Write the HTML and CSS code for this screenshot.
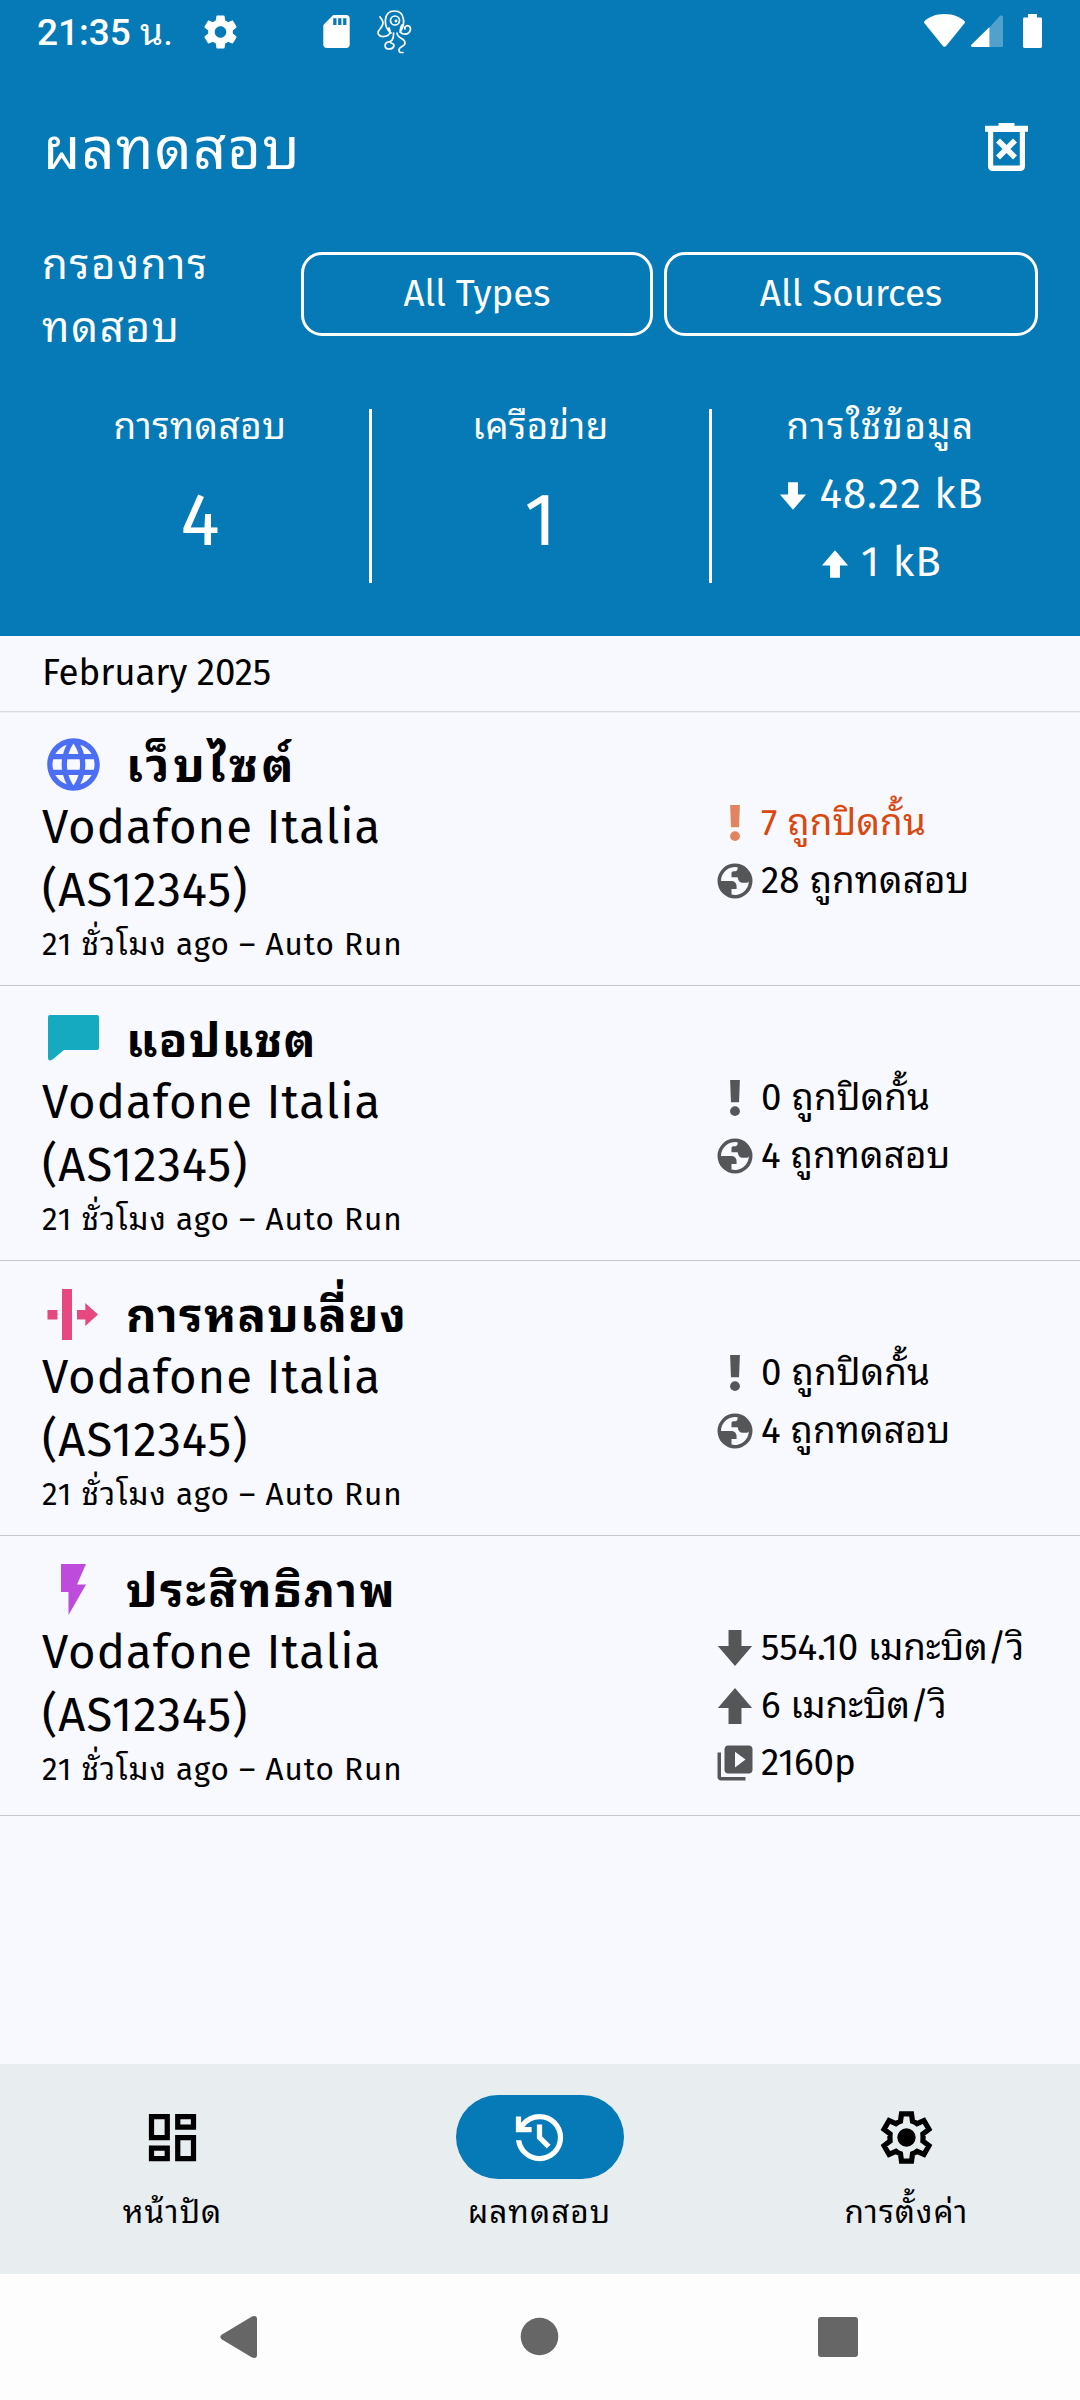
FILE: index.html
```html
<!DOCTYPE html>
<html lang="th">
<head>
<meta charset="utf-8">
<title>ผลทดสอบ</title>
<link rel="stylesheet" href="styles.css">
</head>
<body>
<svg class="defs" width="0" height="0">
  <symbol id="i-down" viewBox="0 0 24 24"><path d="M8.3 1.7h7.4v9.2h6.1L12 22.3 2.2 10.9h6.1z"/></symbol>
  <symbol id="i-up" viewBox="0 0 24 24"><path d="M8.3 22.3h7.4v-9.2h6.1L12 1.7 2.2 13.1h6.1z"/></symbol>
  <symbol id="i-bang" viewBox="0 0 24 24"><path d="M9.2 1.7h5.6l-.5 12.7H9.7z"/><circle cx="12" cy="19.5" r="2.8"/></symbol>
  <symbol id="i-earth" viewBox="0 0 24 24"><path fill-rule="evenodd" d="M12 2a10 10 0 1 0 0 20 10 10 0 1 0 0-20zM4 12A8 8 0 0 1 13.500 4.150v.8c0 .9-.9 1.500-2 1.500h-.4c-.7 0-1.100.5-1.100 1.100v2.300h3.500c.3 2 1.200 3.100 2.500 3.100h3l.9-.6A8 8 0 0 1 10 19.750V16.500h2.900V15c0-1.800-1.200-3-3-3z"/></symbol>
  <symbol id="i-video" viewBox="0 0 24 24"><path d="M4 6H2v14c0 1.100.9 2 2 2h14v-2H4V6zm16-4H8c-1.100 0-2 .9-2 2v12c0 1.100.9 2 2 2h12c1.100 0 2-.9 2-2V4c0-1.100-.9-2-2-2zm-8 12.500v-9l6 4.500-6 4.500z"/></symbol>
</svg>

<header class="header">
  <div class="status">
    <div class="status-left">
      <span class="clock">21:35 <span class="clock-th">น.</span></span>
      <svg class="s-gear" viewBox="2 2 20 20"><path d="M19.430 12.980c.040-.320.070-.640.070-.980s-.030-.660-.070-.980l2.110-1.650c.190-.150.240-.420.120-.640l-2-3.460c-.120-.220-.390-.300-.610-.220l-2.490 1c-.520-.400-1.080-.730-1.690-.980l-.380-2.650C14.460 2.180 14.250 2 14 2h-4c-.250 0-.460.180-.490.420l-.380 2.650c-.610.250-1.170.590-1.690.980l-2.490-1c-.230-.090-.490 0-.610.220l-2 3.460c-.130.220-.070.490.120.640l2.110 1.650c-.040.320-.070.650-.070.980s.030.660.070.980l-2.110 1.650c-.190.150-.240.420-.120.640l2 3.460c.120.220.390.300.610.220l2.490-1c.520.400 1.080.730 1.690.980l.380 2.650c.030.240.240.420.490.420h4c.250 0 .460-.180.490-.420l.380-2.650c.610-.250 1.170-.590 1.690-.980l2.490 1c.230.090.490 0 .610-.220l2-3.460c.120-.220.070-.490-.120-.640l-2.110-1.650zM12 15.500c-1.930 0-3.500-1.570-3.500-3.500s1.570-3.500 3.500-3.500 3.500 1.570 3.500 3.500-1.570 3.500-3.500 3.500z"/></svg>
      <svg class="s-sd" viewBox="4 2 16 20"><path d="M18 2h-8L4.020 8 4 20c0 1.100.9 2 2 2h12c1.100 0 2-.9 2-2V4c0-1.100-.9-2-2-2zm-6 6h-2V4h2v4zm3 0h-2V4h2v4zm3 0h-2V4h2v4z"/></svg>
      <svg class="s-octo" viewBox="377 9 35 45"><path d="M391 33C383 27 383 11 394.500 11S405 26 400 32M380 17C384 22 384 24 380 29C376 33 379 37 384 36.500C390 36 391 32 389 28M402 25C399 30 400 34 404 34C409 35 411.500 30 410 27C408 24.500 404 26 405 29M393.500 33C394 40 391 42 388 42C384 43 384 49 389 49C394 49 396 44 391 43M397 33C398 40 405 37 405 43C405 47 399 46 399 50C399 53 401 52.500 403 52.500"/><circle cx="395" cy="20.500" r="4.500"/><circle class="pupil" cx="396" cy="21" r="1.400"/></svg>
    </div>
    <div class="status-right">
      <svg class="s-wifi" viewBox="0 0 41 33"><path d="M20.500 0C12 0 5 2.800.6 7c-.7.700-.7 1.500-.1 2.300l18.200 22.500c1 1.200 2.600 1.200 3.600 0L40.500 9.300c.6-.8.600-1.600-.1-2.300C36 2.800 29 0 20.500 0z"/></svg>
      <svg class="s-signal" viewBox="0 0 32 32"><path class="dim" d="M18.500 12.500 28.700 1C30 0 32 .6 32 2v28.500c0 .9-.6 1.500-1.500 1.500h-12z"/><path d="M18.500 12V32H1.500C0 32-.4 30.500.6 29.500z"/></svg>
      <svg class="s-batt" viewBox="0 0 19 34"><path d="M5 0h9v3.500h3.600c.8 0 1.400.6 1.400 1.400v27.700c0 .8-.6 1.400-1.400 1.400H1.400C.6 34 0 33.400 0 32.600V4.900c0-.8.6-1.400 1.400-1.400H5z"/></svg>
    </div>
  </div>
  <div class="titlebar">
    <h1 class="title">ผลทดสอบ</h1>
    <svg class="trash" viewBox="0 0 43 48"><path d="M13.500 0h16v2.800H43v6H0v-6h13.500z"/><path fill-rule="evenodd" d="M3 7h37v36.500c0 2.500-2 4.500-4.500 4.500h-28C5 48 3 46 3 43.500zm5.200 2v33.500h26.600V9z"/><path class="x" d="M13 17.500 30 34.500M30 17.500 13 34.500"/></svg>
  </div>
  <div class="filters">
    <div class="filter-label">กรองการ<br>ทดสอบ</div>
    <div class="chip chip-types">All Types</div>
    <div class="chip chip-sources">All Sources</div>
  </div>
  <div class="stats">
    <div class="stat"><div class="stat-label">การทดสอบ</div><div class="stat-num">4</div></div>
    <div class="rule"></div>
    <div class="stat"><div class="stat-label">เครือข่าย</div><div class="stat-num">1</div></div>
    <div class="rule"></div>
    <div class="stat">
      <div class="stat-label usage-label">การใช้ข้อมูล</div>
      <div class="usage usage-first"><svg><use href="#i-down"/></svg><span>48.22 kB</span></div>
      <div class="usage"><svg><use href="#i-up"/></svg><span>1 kB</span></div>
    </div>
  </div>
</header>

<main class="list">
  <div class="month">February 2025</div>

  <article class="row">
    <div class="info">
      <div class="kind">
        <svg class="web" viewBox="0 0 24 24"><path d="M11.990 2C6.470 2 2 6.480 2 12s4.470 10 9.990 10C17.520 22 22 17.520 22 12S17.520 2 11.990 2zm6.930 6h-2.950c-.320-1.250-.780-2.450-1.380-3.560 1.840.630 3.370 1.910 4.330 3.560zM12 4.040c.830 1.200 1.480 2.530 1.910 3.960h-3.820c.430-1.430 1.080-2.760 1.910-3.960zM4.260 14C4.100 13.360 4 12.690 4 12s.1-1.360.260-2h3.380c-.080.660-.140 1.320-.140 2 0 .680.060 1.340.140 2H4.260zm.820 2h2.950c.320 1.250.780 2.450 1.380 3.560-1.840-.630-3.370-1.900-4.330-3.560zm2.950-8H5.080c.960-1.660 2.490-2.930 4.330-3.560C8.810 5.550 8.350 6.750 8.030 8zM12 19.960c-.830-1.200-1.480-2.530-1.910-3.960h3.820c-.430 1.430-1.080 2.760-1.910 3.960zM14.340 14H9.660c-.090-.660-.160-1.320-.160-2 0-.680.070-1.350.160-2h4.680c.090.650.160 1.320.160 2 0 .680-.070 1.340-.160 2zm.250 5.560c.600-1.110 1.060-2.310 1.380-3.560h2.950c-.960 1.650-2.490 2.930-4.330 3.560zM16.360 14c.080-.660.140-1.320.140-2 0-.680-.060-1.340-.140-2h3.380c.160.640.260 1.310.260 2s-.1 1.360-.260 2h-3.380z"/></svg>
        <h2 class="name-web">เว็บไซต์</h2>
      </div>
      <div class="network">Vodafone Italia<br>(AS12345)</div>
      <div class="meta">21 ชั่วโมง ago – Auto Run</div>
    </div>
    <div class="facts">
      <div class="fact alert"><svg><use href="#i-bang"/></svg><span>7 ถูกปิดกั้น</span></div>
      <div class="fact"><svg><use href="#i-earth"/></svg><span>28 ถูกทดสอบ</span></div>
    </div>
  </article>

  <article class="row">
    <div class="info">
      <div class="kind">
        <svg class="chat" viewBox="0 0 63 63"><path d="M8 7h47q2 0 2 2v31q0 2-2 2H22L10.500 51.500Q6 54 6 50V9q0-2 2-2z"/></svg>
        <h2>แอปแชต</h2>
      </div>
      <div class="network">Vodafone Italia<br>(AS12345)</div>
      <div class="meta">21 ชั่วโมง ago – Auto Run</div>
    </div>
    <div class="facts">
      <div class="fact"><svg><use href="#i-bang"/></svg><span>0 ถูกปิดกั้น</span></div>
      <div class="fact"><svg><use href="#i-earth"/></svg><span>4 ถูกทดสอบ</span></div>
    </div>
  </article>

  <article class="row">
    <div class="info">
      <div class="kind">
        <svg class="bypass" viewBox="0 0 63 63"><path d="M20 6h10v51H20zM5.500 27h10v9.500h-10zM35 27h8.300v-7L56 31.500 43.300 43v-6.500H35z"/></svg>
        <h2>การหลบเลี่ยง</h2>
      </div>
      <div class="network">Vodafone Italia<br>(AS12345)</div>
      <div class="meta">21 ชั่วโมง ago – Auto Run</div>
    </div>
    <div class="facts">
      <div class="fact"><svg><use href="#i-bang"/></svg><span>0 ถูกปิดกั้น</span></div>
      <div class="fact"><svg><use href="#i-earth"/></svg><span>4 ถูกทดสอบ</span></div>
    </div>
  </article>

  <article class="row row-last">
    <div class="info">
      <div class="kind">
        <svg class="bolt" viewBox="0 0 63 63"><path d="M19 6h25L35 26.500h9L26.500 57V34H19z"/></svg>
        <h2 class="name-perf">ประสิทธิภาพ</h2>
      </div>
      <div class="network">Vodafone Italia<br>(AS12345)</div>
      <div class="meta">21 ชั่วโมง ago – Auto Run</div>
    </div>
    <div class="facts">
      <div class="fact"><svg><use href="#i-down"/></svg><span class="speed">554.10 เมกะบิต/วิ</span></div>
      <div class="fact"><svg><use href="#i-up"/></svg><span class="speed">6 เมกะบิต/วิ</span></div>
      <div class="fact"><svg><use href="#i-video"/></svg><span class="speed">2160p</span></div>
    </div>
  </article>
</main>

<nav class="tabs">
  <div class="tab"><div class="pill"><svg viewBox="0 0 24 24"><path d="M19 5v2h-4V5h4M9 5v6H5V5h4m10 8v6h-4v-6h4M9 17v2H5v-2h4M21 3h-8v6h8V3zM11 3H3v10h8V3zm10 8h-8v10h8V11zm-10 4H3v6h8v-6z"/></svg></div><span>หน้าปัด</span></div>
  <div class="tab active"><div class="pill"><svg viewBox="0 0 24 24"><path d="M12 21q-3.450 0-6.010-2.290T3.050 13H5.100q.350 2.600 2.310 4.300T12 19q2.930 0 4.960-2.040T19 12t-2.040-4.960T12 5q-1.730 0-3.230.8T6.250 8H9v2H3V4h2v2.350Q6.280 4.750 8.110 3.880T12 3q1.880 0 3.510.71t2.850 1.930 1.930 2.850T21 12t-.71 3.510-1.930 2.850-2.850 1.930T12 21zm2.800-4.800L11 12.400V7h2v4.600l3.200 3.200z"/></svg></div><span>ผลทดสอบ</span></div>
  <div class="tab"><div class="pill"><svg viewBox="0 0 24 24"><path class="gear-line" d="M10.100 3h3.800l.4 2.850q.9.300 1.700.9l2.650-1.150 1.900 3.250-2.300 1.750q.15 1.400 0 2.800l2.300 1.750-1.900 3.250L16 17.250q-.8.600-1.700.9L13.900 21h-3.800l-.4-2.850q-.9-.3-1.700-.9L5.350 18.400l-1.900-3.250 2.300-1.750q-.15-1.400 0-2.800L3.450 8.850 5.350 5.600 8 6.750q.8-.6 1.700-.9z"/><circle cx="12" cy="12" r="3.500"/></svg></div><span>การตั้งค่า</span></div>
</nav>

<footer class="sysnav">
  <svg viewBox="0 0 1080 126"><path d="M222 60.500 252 42.500Q257 41 257 45V81Q257 85 252 83.500L222 65.500Q218.500 63 222 60.500z"/><circle cx="539.500" cy="62.500" r="18.800"/><rect x="818" y="43" width="40" height="40" rx="3"/></svg>
</footer>
</body>
</html>
```
FILE: styles.css
```css
* { box-sizing: border-box; }

body {
  margin: 0;
  width: 1080px;
  height: 2400px;
  display: flex;
  flex-direction: column;
  background: #f8f9ff;
  color: #000;
  font-family: "Fira Sans", "Noto Sans Thai Looped", "Noto Sans", sans-serif;
  overflow: hidden;
}

svg { display: block; flex: none; fill: currentColor; }
.defs { position: absolute; }
h1, h2 { margin: 0; font-weight: 400; }
span, h1, h2, .meta { white-space: nowrap; }

/* Header */
.header { height: 636px; background: #057ab7; color: #fff; }

.status {
  height: 63px;
  display: flex;
  justify-content: space-between;
  padding: 0 38px 0 37px;
}
.status-left, .status-right { display: flex; align-items: flex-start; }
.clock {
  width: 167px;
  font: 500 37px/66px Roboto, "Noto Sans Thai Looped", sans-serif;
}
.clock-th { font-weight: 400; }
.s-gear { width: 33px; height: 34px; margin-top: 15px; }
.s-sd { width: 27px; height: 33px; margin: 15px 0 0 86px; }
.s-octo { width: 35px; height: 45px; margin: 9px 0 0 27px; fill: none; stroke: #fff; stroke-width: 1.7; stroke-linecap: round; }
.s-octo .pupil { fill: #fff; stroke: none; }
.s-wifi { width: 41px; height: 33px; margin-top: 14px; }
.s-signal { width: 32px; height: 32px; margin: 15px 0 0 6px; }
.s-signal .dim { opacity: .3; }
.s-batt { width: 19px; height: 34px; margin: 14px 0 0 20px; }

.titlebar {
  height: 168px;
  display: flex;
  justify-content: space-between;
  padding: 53px 52px 0 43px;
}
.title { font-size: 57.75px; line-height: 68px; letter-spacing: 1.2px; }
.trash { width: 43px; height: 48px; margin-top: 7px; }
.trash .x { stroke: #fff; stroke-width: 5.6; }

.filters { height: 168px; display: flex; padding-left: 42px; }
.filter-label { width: 259px; padding-top: 3px; font-size: 42px; line-height: 63px; letter-spacing: 1.7px; }
.chip {
  height: 84px;
  margin-top: 21px;
  border: 3px solid #fff;
  border-radius: 21px;
  font-size: 36.75px;
  line-height: 78px;
  text-align: center;
}
.chip-types { width: 352px; margin-right: 11px; }
.chip-sources { width: 374px; }

.stats {
  display: grid;
  grid-template-columns: 338px 3px 337px 3px 337px;
  padding: 2px 0 0 31px;
}
.rule { height: 174px; margin-top: 8px; background: #fff; }
.stat { text-align: center; }
.stat-label { font-size: 36.75px; line-height: 52px; letter-spacing: .5px; }
.usage-label { letter-spacing: 1.4px; }
.stat-num { margin-top: 27px; font-size: 73.5px; line-height: 80px; }
.usage { display: flex; justify-content: center; align-items: center; height: 68px; font-size: 42px; line-height: 68px; letter-spacing: 1.1px; }
.usage-first { margin-top: 7px; }
.usage svg { width: 32px; height: 32px; margin: 4px 10px 0 0; }

/* Result list */
.list { flex: 1; }
.month {
  height: 75px;
  padding-left: 42px;
  box-shadow: 0 1px #d9dbdf, 0 2px #eef0f5;
  font-size: 36.75px;
  line-height: 75px;
  letter-spacing: -.15px;
}
.row {
  height: 275px;
  display: flex;
  padding: 21px 0 0 42px;
  border-bottom: 1px solid #c4c6cc;
}
.row-last { height: 280px; }
.info { width: 672px; }
.kind { height: 64px; display: flex; gap: 21px; }
.kind svg { width: 63px; height: 63px; margin-top: 1px; }
.kind h2 { font-size: 47.25px; line-height: 69px; font-weight: 700; letter-spacing: 1.2px; }
.kind .name-web { letter-spacing: 3.6px; }
.kind .name-perf { letter-spacing: 2.3px; }
.web { color: #4c6ef5; }
.chat { color: #15aabf; }
.bypass { color: #e64980; }
.bolt { color: #be4bdb; }
.network { font-size: 47.25px; line-height: 63px; letter-spacing: 1px; }
.meta { font-size: 31.5px; line-height: 46px; letter-spacing: .9px; }

.facts { padding-top: 62px; }
.fact { display: flex; height: 57.5px; font-size: 36.75px; line-height: 59px; letter-spacing: .15px; }
.fact svg { width: 42px; height: 42px; margin: 8px 5px 0 0; color: #555658; }
.fact .speed { letter-spacing: -.1px; }
.fact.alert { color: #d9480f; }
.fact.alert svg { color: #d9480f; opacity: .66; }

/* Bottom tabs */
.tabs {
  height: 210px;
  display: grid;
  grid-template-columns: repeat(3, 346px);
  column-gap: 21px;
  justify-content: center;
  background: #e8eef0;
}
.tab { display: flex; flex-direction: column; align-items: center; padding-top: 31px; font-size: 31.5px; line-height: 44px; letter-spacing: 1.05px; }
.tab span { margin-right: 1px; }
.pill { width: 168px; height: 84px; margin-bottom: 12px; display: flex; align-items: center; justify-content: center; border-radius: 42px; }
.pill svg { width: 63px; height: 63px; margin-right: 2px; }
.active .pill { background: #057ab7; color: #fff; }
.gear-line { fill: none; stroke: currentColor; stroke-width: 2; }

.sysnav { height: 126px; background: #fdfdfd; color: #666; }
```
